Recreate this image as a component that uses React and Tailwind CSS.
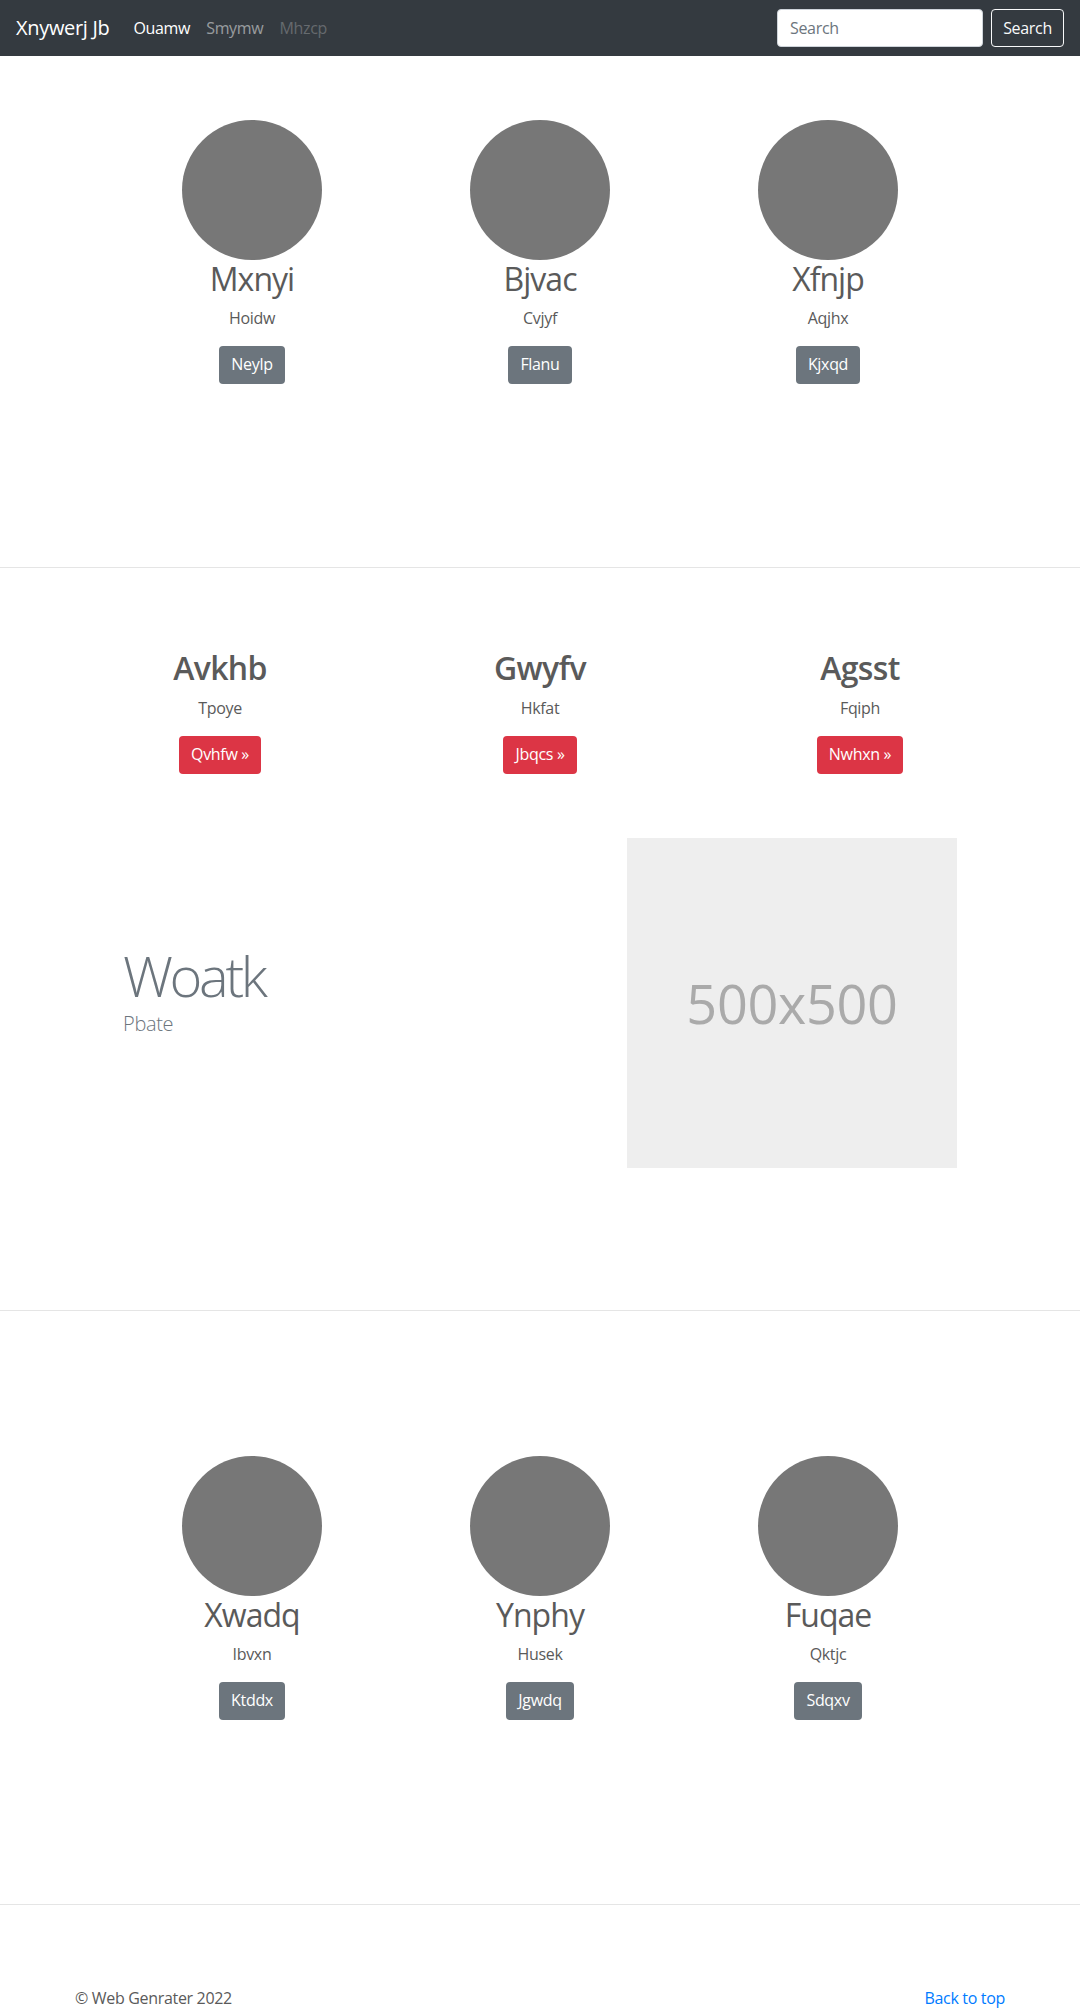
import React from "react";

const font = { fontFamily: '"Open Sans", "Noto Sans", Arial, sans-serif' };

function Circle() {
  return (
    <svg width="140" height="140" className="block" viewBox="0 0 140 140">
      <circle cx="70" cy="70" r="70" fill="#777777" />
    </svg>
  );
}

function PersonCol({ name, sub, btn }) {
  return (
    <div className="flex flex-col items-center px-[15px] text-center">
      <Circle />
      <h2 className="text-[32px] leading-[38.4px] font-normal text-[#5a5a5a] mb-2 tracking-[-0.03em]">{name}</h2>
      <p className="text-base leading-6 text-[#5a5a5a] mb-4">{sub}</p>
      <a className="inline-block h-[38px] leading-[24px] px-3 py-[6px] rounded bg-[#6c757d] text-white text-base">{btn}</a>
    </div>
  );
}

function RedCol({ name, sub, btn }) {
  return (
    <div className="flex flex-col items-center px-[15px] text-center">
      <h2 className="text-[32px] leading-[38.4px] font-semibold text-[#5a5a5a] mb-2 tracking-[-0.02em]">{name}</h2>
      <p className="text-base leading-6 text-[#5a5a5a] mb-4">{sub}</p>
      <a className="inline-block h-[38px] leading-[24px] px-3 py-[6px] rounded bg-[#dc3545] text-white text-base">{btn} »</a>
    </div>
  );
}

export default function App() {
  return (
    <div style={font} className="bg-white text-[#5a5a5a] tracking-[-0.02em]">
      <nav className="h-14 bg-[#343a40] flex items-center px-4">
        <a className="text-xl leading-[30px] text-white mr-4">Xnywerj Jb</a>
        <ul className="flex text-base leading-6">
          <li><a className="block px-2 py-2 text-white">Ouamw</a></li>
          <li><a className="block px-2 py-2 text-[rgba(255,255,255,0.5)]">Smymw</a></li>
          <li><a className="block px-2 py-2 text-[rgba(255,255,255,0.25)]">Mhzcp</a></li>
        </ul>
        <form className="ml-auto flex items-center">
          <input
            type="text"
            placeholder="Search"
            className="w-[206px] h-[38px] mr-2 px-3 rounded bg-white border border-[#ced4da] text-base text-[#495057] placeholder:text-[#6c757d] outline-none"
          />
          <button type="button" className="h-[38px] w-[73px] rounded border border-[#f8f9fa] text-[#f8f9fa] text-base">Search</button>
        </form>
      </nav>

      <section className="pt-16 pb-[183px]">
        <div className="w-[864px] mx-auto grid grid-cols-3">
          <PersonCol name="Mxnyi" sub="Hoidw" btn="Neylp" />
          <PersonCol name="Bjvac" sub="Cvjyf" btn="Flanu" />
          <PersonCol name="Xfnjp" sub="Aqjhx" btn="Kjxqd" />
        </div>
      </section>

      <hr className="border-0 border-t border-[#e5e5e5]" />

      <section className="pt-[81px]">
        <div className="w-[960px] mx-auto grid grid-cols-3">
          <RedCol name="Avkhb" sub="Tpoye" btn="Qvhfw" />
          <RedCol name="Gwyfv" sub="Hkfat" btn="Jbqcs" />
          <RedCol name="Agsst" sub="Fqiph" btn="Nwhxn" />
        </div>
        <div className="w-[864px] mx-auto mt-16 grid grid-cols-12 items-center pb-[142px]">
          <div className="col-span-7 px-[15px]">
            <h2 className="text-[56px] leading-[67.2px] font-light text-[#6c757d] mb-0 tracking-[-0.06em]">Woatk</h2>
            <p className="text-xl leading-[30px] font-light text-[#6c757d] mb-6">Pbate</p>
          </div>
          <div className="col-span-5 px-[15px]">
            <div className="w-[330px] h-[330px] bg-[#eeeeee] flex items-center justify-center">
              <span className="text-[54px] text-[#aaaaaa] leading-none">500x500</span>
            </div>
          </div>
        </div>
      </section>

      <hr className="border-0 border-t border-[#e5e5e5]" />

      <section className="pt-[145px] pb-[184px]">
        <div className="w-[864px] mx-auto grid grid-cols-3">
          <PersonCol name="Xwadq" sub="Ibvxn" btn="Ktddx" />
          <PersonCol name="Ynphy" sub="Husek" btn="Jgwdq" />
          <PersonCol name="Fuqae" sub="Qktjc" btn="Sdqxv" />
        </div>
      </section>

      <hr className="border-0 border-t border-[#e5e5e5]" />

      <footer className="w-[960px] mx-auto px-[15px] pt-[81px] flex justify-between text-base leading-6">
        <p className="text-[#5a5a5a]">© Web Genrater 2022</p>
        <a className="text-[#007bff]">Back to top</a>
      </footer>
    </div>
  );
}
